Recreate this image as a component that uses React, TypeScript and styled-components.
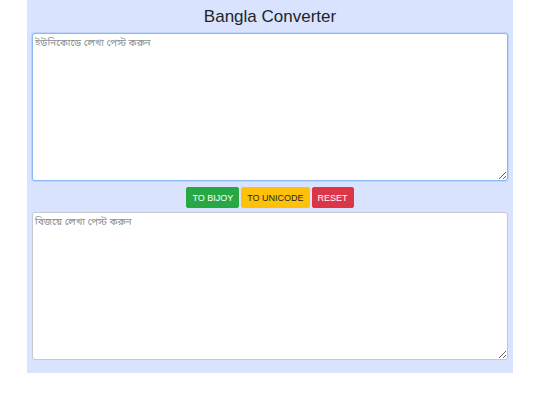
import React, { useState } from 'react'
import styled, { createGlobalStyle } from 'styled-components'

const GlobalStyle = createGlobalStyle`
    body {
        margin: 0;
        background: #ffffff;
        font-family: "Liberation Sans", Arial, sans-serif;
    }
`

const Wrapper = styled.div`
    width: 486px;
    margin: 0 auto;
    background-color: #dae3fd;
    padding: 0 5px 13px;
    box-sizing: border-box;
    display: flex;
    flex-direction: column;
`

const Title = styled.h1`
    margin: 0;
    height: 33px;
    line-height: 33px;
    text-align: center;
    font-size: 17px;
    font-weight: normal;
    color: #212529;
`

const TextBox = styled.textarea<{ focused?: boolean }>`
    display: block;
    width: 100%;
    height: 148px;
    box-sizing: border-box;
    resize: vertical;
    padding: 3px 2px;
    border: 1px solid ${props => props.focused ? '#8bb8f5' : '#c6c9d0'};
    border-radius: 3px;
    background: #ffffff;
    outline: none;
    font-family: "Noto Sans Bengali", "Noto Sans", "Liberation Sans", sans-serif;
    font-size: 10px;
    color: #212529;
    box-shadow: ${props => props.focused ? '0 0 0 1px rgba(139, 184, 245, 0.35)' : 'none'};

    &::placeholder {
        color: #8a8f95;
    }
`

const ButtonsRow = styled.div`
    display: flex;
    justify-content: center;
    gap: 2px;
    margin: 6px 0 4px;
`

const ActionButton = styled.button<{ bg: string; fg: string }>`
    height: 21px;
    padding: 0 5px;
    border: 1px solid ${props => props.bg};
    border-radius: 2px;
    background-color: ${props => props.bg};
    color: ${props => props.fg};
    font-family: "Liberation Sans", Arial, sans-serif;
    font-size: 9px;
    cursor: pointer;
`

const App: React.FC = () => {
    const [unicode, setUnicode] = useState('')
    const [bijoy, setBijoy] = useState('')

    return (
        <>
            <GlobalStyle />
            <Wrapper>
                <Title>Bangla Converter</Title>
                <TextBox
                    focused
                    value={unicode}
                    onChange={e => setUnicode(e.target.value)}
                    placeholder="ইউনিকোডে লেখা পেস্ট করুন"
                />
                <ButtonsRow>
                    <ActionButton bg="#28a745" fg="#ffffff" onClick={() => setBijoy(unicode)}>TO BIJOY</ActionButton>
                    <ActionButton bg="#ffc107" fg="#212529" onClick={() => setUnicode(bijoy)}>TO UNICODE</ActionButton>
                    <ActionButton bg="#dc3545" fg="#ffffff" onClick={() => { setUnicode(''); setBijoy('') }}>RESET</ActionButton>
                </ButtonsRow>
                <TextBox
                    value={bijoy}
                    onChange={e => setBijoy(e.target.value)}
                    placeholder="বিজয়ে লেখা পেস্ট করুন"
                />
            </Wrapper>
        </>
    )
}

export default App
